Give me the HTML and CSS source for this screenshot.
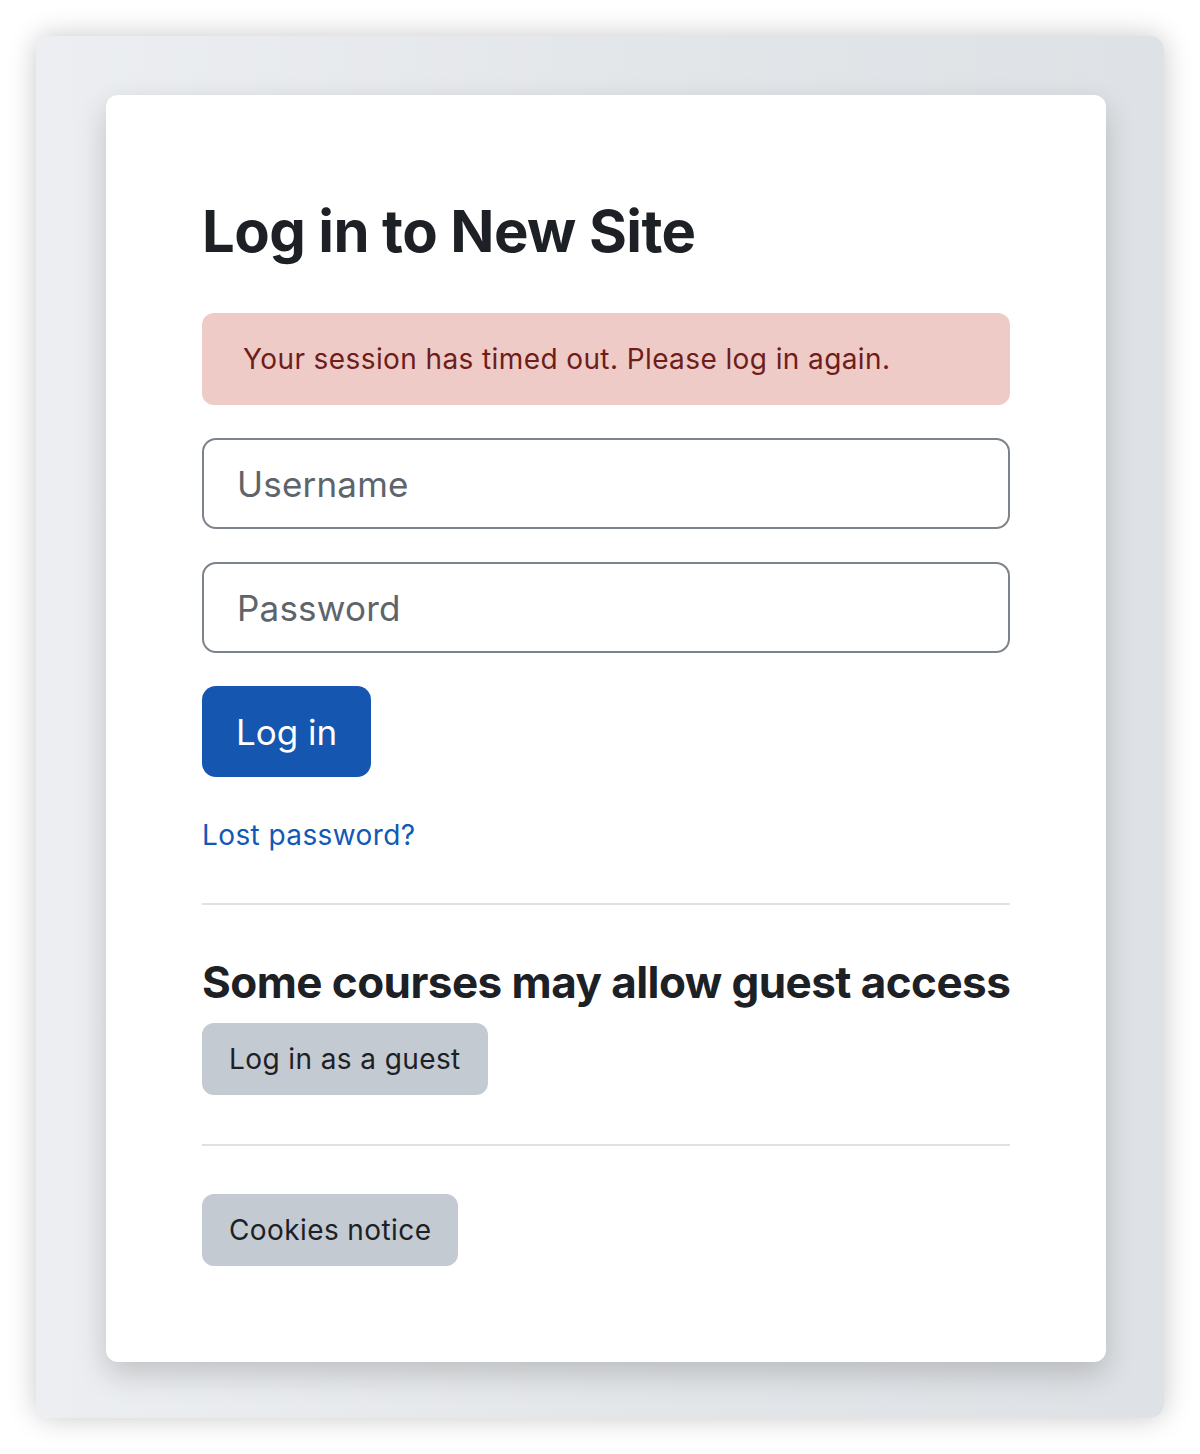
FILE: index.html
```html
<!DOCTYPE html>
<html lang="en">

<head>
  <meta charset="UTF-8">
  <meta name="viewport" content="width=device-width, initial-scale=1.0">
  <title>Log in to New Site</title>
  <link rel="stylesheet" href="styles.css">
</head>

<body>
  <div class="frame">
    <div class="login-card">
      <h1>Log in to New Site</h1>

      <!-- Session timeout notice -->
      <div class="alert">Your session has timed out. Please log in again.</div>

      <form class="login-form" action="#" method="post">
        <input type="text" name="username" placeholder="Username">
        <input type="password" name="password" placeholder="Password">
        <button type="submit" class="btn-primary">Log in</button>
      </form>

      <a href="#" class="lost-link">Lost password?</a>

      <hr>

      <h2>Some courses may allow guest access</h2>
      <button class="btn-secondary">Log in as a guest</button>

      <hr class="second">

      <button class="btn-secondary cookies">Cookies notice</button>
    </div>
  </div>
</body>

</html>
```

FILE: styles.css
```css
body {
  margin: 0;
  font-family: Inter, "Noto Sans", sans-serif;
  background-color: #ffffff;
  color: #1d2125;
}

.frame {
  margin: 36px;
  height: 1382px;
  box-sizing: border-box;
  padding: 59px 58px 0 70px;
  border-radius: 14px;
  background: linear-gradient(90deg, #eceef1 0%, #e3e6e9 55%, #dee1e5 100%);
  box-shadow: 0 0 28px rgba(0, 0, 0, 0.22);
}

.login-card {
  box-sizing: border-box;
  height: 1267px;
  padding: 100px 96px 0 96px;
  background-color: #ffffff;
  border-radius: 12px;
  box-shadow: 0 12px 30px rgba(0, 0, 0, 0.18);
}

h1 {
  margin: 0 0 46px 0;
  font-size: 58px;
  font-weight: 700;
  line-height: 72px;
  letter-spacing: -0.6px;
  color: #1d2125;
}

.alert {
  box-sizing: border-box;
  height: 92px;
  padding: 0 41px;
  display: flex;
  align-items: center;
  background-color: #efcbc8;
  color: #6e1d1a;
  border-radius: 12px;
  font-size: 28px;
  letter-spacing: 0.4px;
  margin-bottom: 33px;
}

.login-form {
  display: flex;
  flex-direction: column;
  align-items: flex-start;
  gap: 33px;
}

.login-form input {
  box-sizing: border-box;
  width: 100%;
  height: 91px;
  padding: 0 33px;
  border: 2px solid #7c838b;
  border-radius: 14px;
  font-family: inherit;
  font-size: 35px;
  letter-spacing: 0.2px;
  color: #1d2125;
  background-color: #ffffff;
}

.login-form input::placeholder {
  color: #5d646c;
}

.btn-primary {
  box-sizing: border-box;
  height: 91px;
  padding: 0 34px;
  border: none;
  border-radius: 14px;
  background-color: #1456b0;
  color: #ffffff;
  font-family: inherit;
  font-size: 35px;
  cursor: pointer;
}

.lost-link {
  display: block;
  width: max-content;
  margin-top: 41px;
  font-size: 28px;
  line-height: 34px;
  letter-spacing: 0.4px;
  color: #1258b5;
  text-decoration: none;
}

hr {
  margin: 51px 0 0 0;
  border: none;
  border-top: 2px solid #dee2e6;
}

h2 {
  margin: 51px 0 15px 0;
  font-size: 44px;
  font-weight: 700;
  line-height: 52px;
  letter-spacing: -0.55px;
  color: #1d2125;
  white-space: nowrap;
}

.btn-secondary {
  display: block;
  box-sizing: border-box;
  height: 72px;
  padding: 0 27px;
  border: none;
  border-radius: 12px;
  background-color: #c4cad2;
  color: #1d2125;
  font-family: inherit;
  font-size: 28px;
  letter-spacing: 0.4px;
  cursor: pointer;
}

hr.second {
  margin-top: 49px;
}

.cookies {
  margin-top: 48px;
}
```
